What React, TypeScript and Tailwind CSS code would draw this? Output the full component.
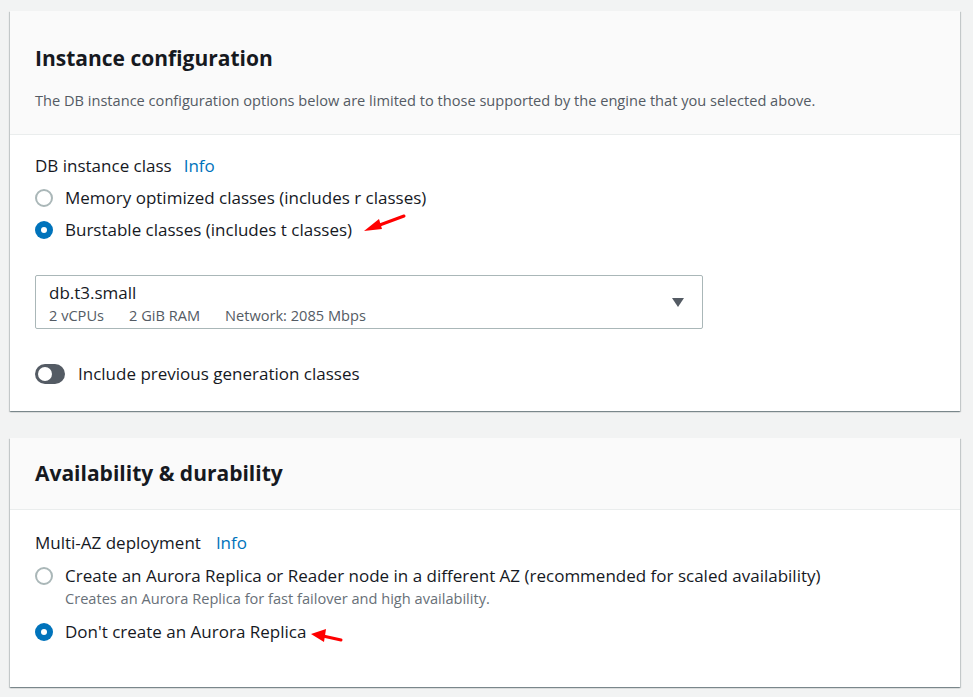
import { ReactNode } from 'react';

const font = { fontFamily: '"Open Sans", "Noto Sans", sans-serif' };

function Radio({ checked }: { checked?: boolean }) {
  return checked ? (
    <span className="flex h-[18px] w-[18px] shrink-0 items-center justify-center rounded-full bg-[#0073bb]">
      <span className="h-[6px] w-[6px] rounded-full bg-white" />
    </span>
  ) : (
    <span className="block h-[18px] w-[18px] shrink-0 rounded-full border-2 border-[#aab7b8] bg-white" />
  );
}

function RedArrow({ className, d, head }: { className: string; d: string; head: string }) {
  return (
    <svg className={`pointer-events-none absolute ${className}`} viewBox="0 0 50 30" width="50" height="30">
      <path d={d} stroke="#f00" strokeWidth="3" strokeLinecap="round" fill="none" />
      <polygon points={head} fill="#f00" />
    </svg>
  );
}

function Section({ title, description, children }: { title: string; description?: string; children: ReactNode }) {
  return (
    <div className="w-[950px] bg-white shadow-[0_1px_1px_0_rgba(0,28,36,0.3),1px_1px_1px_0_rgba(0,28,36,0.15),-1px_1px_1px_0_rgba(0,28,36,0.15)]">
      <div className={`border-b border-[#eaeded] bg-[#fafafa] px-[25px] ${description ? 'pt-[33px] pb-[23px]' : 'pt-[21px] pb-[22px]'}`}>
        <h2 className="text-[21px] font-bold leading-[28px] text-[#16191f]">{title}</h2>
        {description && (
          <p className="mt-[17px] text-[14.6px] leading-[22px] text-[#545b64]">{description}</p>
        )}
      </div>
      {children}
    </div>
  );
}

export default function App() {
  return (
    <div className="min-h-[697px] bg-[#f2f3f3] pl-[10px] pt-[11px]" style={font}>
      <Section
        title="Instance configuration"
        description="The DB instance configuration options below are limited to those supported by the engine that you selected above."
      >
        <div className="px-[25px] pt-[20px] pb-[27px] text-[17px] text-[#16191f]">
          <div className="flex items-center gap-3 leading-[22px]">
            <span>DB instance class</span>
            <a className="text-[#0073bb]">Info</a>
          </div>
          <div className="mt-[9px] flex items-center gap-3 leading-[24px]">
            <Radio />
            <span>Memory optimized classes (includes r classes)</span>
          </div>
          <div className="relative mt-[8px] flex items-center gap-3 leading-[24px]">
            <Radio checked />
            <span>Burstable classes (includes t classes)</span>
            <RedArrow className="left-[326px] top-[-10px]" d="M43 8 L16 18" head="3,23 18,11 21,21" />
          </div>
          <div className="mt-[33px] flex h-[54px] w-[668px] items-center justify-between rounded-[2px] border border-[#aab7b8] pl-[13px] pr-[17px]">
            <div className="pt-[4px]">
              <div className="leading-[20px]">db.t3.small</div>
              <div className="mt-[2px] flex gap-[25px] text-[14.6px] leading-[20px] text-[#545b64]">
                <span>2 vCPUs</span>
                <span>2 GiB RAM</span>
                <span>Network: 2085 Mbps</span>
              </div>
            </div>
            <svg width="14" height="12" viewBox="0 0 14 12">
              <polygon points="1,2 13,2 7,11" fill="#545b64" />
            </svg>
          </div>
          <div className="mt-[35px] flex items-center gap-[13px] leading-[20px]">
            <span className="flex h-[20px] w-[30px] shrink-0 items-center rounded-full bg-[#545b64] pl-[3px]">
              <span className="h-[14px] w-[14px] rounded-full bg-white" />
            </span>
            <span>Include previous generation classes</span>
          </div>
        </div>
      </Section>

      <div className="h-[27px]" />

      <Section title="Availability & durability">
        <div className="px-[25px] pt-[22px] pb-[43px] text-[17px] text-[#16191f]">
          <div className="flex items-center gap-[15px] leading-[22px]">
            <span>Multi-AZ deployment</span>
            <a className="text-[#0073bb]">Info</a>
          </div>
          <div className="mt-[10px] flex gap-3">
            <div className="shrink-0 pt-[3px]">
              <Radio />
            </div>
            <div>
              <div className="leading-[24px]">
                Create an Aurora Replica or Reader node in a different AZ (recommended for scaled availability)
              </div>
              <div className="text-[14.6px] leading-[20px] text-[#687078]">
                Creates an Aurora Replica for fast failover and high availability.
              </div>
            </div>
          </div>
          <div className="relative mt-[12px] flex items-center gap-3 leading-[24px]">
            <Radio checked />
            <span>Don't create an Aurora Replica</span>
            <RedArrow className="left-[274px] top-[4px]" d="M32 16 L14 12" head="2,10 17,5 15,18" />
          </div>
        </div>
      </Section>
    </div>
  );
}
